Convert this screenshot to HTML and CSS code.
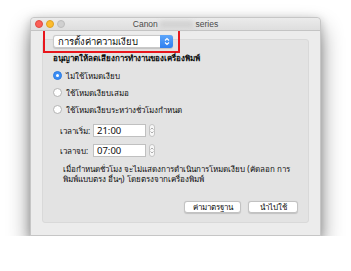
FILE: index.html
```html
<!DOCTYPE html>
<html>

<head>
    <link rel="stylesheet" href="styles.css">
</head>

<body>
    <div class="window">
        <div class="titlebar">
            <div class="lights">
                <span class="light red"></span>
                <span class="light yellow"></span>
                <span class="light grey"></span>
            </div>
            <p class="title">Canon <span class="blurred"></span> series</p>
        </div>

        <div class="content">
            <div class="group">
                <div class="popup-wrap">
                    <div class="popup">
                        <span class="popup-text">การตั้งค่าความเงียบ</span>
                        <span class="popup-arrows">
                            <svg width="6" height="9" viewBox="0 0 6 9">
                                <polyline points="1,3.5 3,1.5 5,3.5" fill="none" stroke="white" stroke-width="1.1" />
                                <polyline points="1,5.5 3,7.5 5,5.5" fill="none" stroke="white" stroke-width="1.1" />
                            </svg>
                        </span>
                    </div>
                </div>

                <p class="heading">อนุญาตให้ลดเสียงการทำงานของเครื่องพิมพ์</p>

                <div class="radios">
                    <label class="radio-row"><span class="radio checked"></span>ไม่ใช้โหมดเงียบ</label>
                    <label class="radio-row"><span class="radio"></span>ใช้โหมดเงียบเสมอ</label>
                    <label class="radio-row"><span class="radio"></span>ใช้โหมดเงียบระหว่างชั่วโมงกำหนด</label>
                </div>

                <div class="times">
                    <div class="time-row">
                        <span class="time-label">เวลาเริ่ม:</span>
                        <span class="time-input">21:00</span>
                        <span class="stepper">
                            <svg width="4" height="9" viewBox="0 0 4 9">
                                <polyline points="0.5,3.5 2,2 3.5,3.5" fill="none" stroke="#9a9a9a" stroke-width="0.8" />
                                <polyline points="0.5,5.5 2,7 3.5,5.5" fill="none" stroke="#9a9a9a" stroke-width="0.8" />
                            </svg>
                        </span>
                    </div>
                    <div class="time-row">
                        <span class="time-label">เวลาจบ:</span>
                        <span class="time-input">07:00</span>
                        <span class="stepper">
                            <svg width="4" height="9" viewBox="0 0 4 9">
                                <polyline points="0.5,3.5 2,2 3.5,3.5" fill="none" stroke="#9a9a9a" stroke-width="0.8" />
                                <polyline points="0.5,5.5 2,7 3.5,5.5" fill="none" stroke="#9a9a9a" stroke-width="0.8" />
                            </svg>
                        </span>
                    </div>
                </div>

                <p class="note">เมื่อกำหนดชั่วโมง จะไม่แสดงการดำเนินการโหมดเงียบ (คัดลอก การ<br>พิมพ์แบบตรง อื่นๆ) โดยตรงจากเครื่องพิมพ์</p>

                <div class="buttons">
                    <button class="btn">ค่ามาตรฐาน</button>
                    <button class="btn wide">นำไปใช้</button>
                </div>
            </div>
        </div>
    </div>
</body>

</html>
```

FILE: styles.css
```css
* {
    margin: 0;
    padding: 0;
    box-sizing: border-box;
}

body {
    background: #ffffff;
    font-family: "Noto Sans", "DejaVu Sans", sans-serif;
    font-size: 8px;
    color: #0d0d0d;
    padding: 17px 0 0 30px;
}

.window {
    width: 291px;
    height: 219px;
    background: #ececec;
    border: 1px solid #c6c6c6;
    border-radius: 4px 4px 0 0;
    box-shadow: 0 12px 22px rgba(0, 0, 0, 0.45), 0 2px 10px rgba(0, 0, 0, 0.2);
    display: flex;
    flex-direction: column;
}

/* title bar */
.titlebar {
    height: 13px;
    flex: none;
    background: linear-gradient(#ebebeb, #dedede);
    border-bottom: 1px solid #c4c4c4;
    border-radius: 4px 4px 0 0;
    display: flex;
    align-items: center;
    position: relative;
}

.lights {
    display: flex;
    gap: 3px;
    padding-left: 4px;
}

.light {
    width: 8px;
    height: 8px;
    border-radius: 50%;
}

.light.red {
    background: #fc5f57;
    border: 0.5px solid #de4a41;
}

.light.yellow {
    background: #fdbc2e;
    border: 0.5px solid #dea123;
}

.light.grey {
    background: #d0d0d0;
    border: 0.5px solid #bdbdbd;
}

.title {
    position: absolute;
    left: 0;
    right: 0;
    text-align: center;
    font-family: "Liberation Sans", sans-serif;
    font-size: 8.5px;
    color: #4a4a4a;
    line-height: 12px;
    white-space: nowrap;
}

.blurred {
    display: inline-block;
    width: 33px;
    height: 7px;
    vertical-align: -1px;
    background: #d2d2d2;
    filter: blur(2px);
}

/* content */
.content {
    flex: 1;
    padding: 8px 11px 12px 11px;
    display: flex;
}

.group {
    flex: 1;
    background: #e3e3e3;
    border: 1px solid #d9d9d9;
    border-radius: 3px;
    padding: 0 10px 9px 10px;
    display: flex;
    flex-direction: column;
    white-space: nowrap;
}

.popup-wrap {
    outline: 2px solid #e8161c;
    margin: -10px 0 0 -8px;
    padding: 5px 5px 3px 8px;
    width: 133px;
    height: 21px;
    flex: none;
}

.popup {
    width: 120px;
    height: 13px;
    background: #ffffff;
    border: 1px solid #c9c9c9;
    border-radius: 3px;
    display: flex;
    align-items: center;
    justify-content: space-between;
    box-shadow: 0 0.5px 1px rgba(0, 0, 0, 0.15);
}

.popup-text {
    padding-left: 4px;
    font-size: 9.5px;
    line-height: 11px;
}

.popup-arrows {
    width: 13px;
    height: 13px;
    margin-right: -1px;
    background: linear-gradient(#5ea6fa, #2d7ef0);
    border-radius: 0 3px 3px 0;
    display: flex;
    align-items: center;
    justify-content: center;
}

.heading {
    font-weight: bold;
    margin-top: 1px;
    line-height: 11px;
    height: 11px;
}

.radios {
    display: flex;
    flex-direction: column;
    margin-top: 4px;
}

.radio-row {
    display: flex;
    align-items: center;
    gap: 4px;
    height: 17px;
    line-height: 11px;
}

.radio {
    width: 9px;
    height: 9px;
    border-radius: 50%;
    background: #ffffff;
    border: 1px solid #b3b3b3;
    flex: none;
}

.radio.checked {
    background: #3a8df5;
    border-color: #2f7ce0;
    position: relative;
}

.radio.checked::after {
    content: "";
    position: absolute;
    left: 2px;
    top: 2px;
    width: 3px;
    height: 3px;
    border-radius: 50%;
    background: #ffffff;
}

.times {
    display: flex;
    flex-direction: column;
    gap: 7px;
    margin-top: 6px;
    padding-left: 7px;
}

.time-row {
    display: flex;
    align-items: center;
    height: 13px;
}

.time-label {
    width: 33px;
    line-height: 11px;
}

.time-input {
    width: 53px;
    height: 13px;
    background: #ffffff;
    border: 1px solid #c0c0c0;
    padding-left: 3px;
    line-height: 11px;
    font-size: 9.5px;
}

.stepper {
    width: 6px;
    height: 13px;
    margin-left: 3px;
    background: #f7f7f7;
    border: 1px solid #c4c4c4;
    border-radius: 3px;
    display: flex;
    align-items: center;
    justify-content: center;
}

.note {
    margin-top: 7px;
    padding-left: 10px;
    line-height: 10px;
}

.buttons {
    margin-top: auto;
    display: flex;
    justify-content: flex-end;
    gap: 7px;
}

.btn {
    font-family: "Noto Sans", "DejaVu Sans", sans-serif;
    font-size: 8px;
    height: 12px;
    width: 57px;
    background: #ffffff;
    border: 1px solid #c2c2c2;
    border-radius: 3px;
    line-height: 10px;
    color: #0d0d0d;
    box-shadow: 0 0.5px 1px rgba(0, 0, 0, 0.15);
}

.btn.wide {
    width: 50px;
}
```
